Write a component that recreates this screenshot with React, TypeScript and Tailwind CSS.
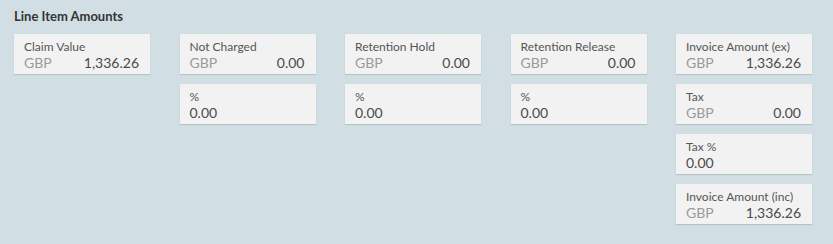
import React from "react";

type CardProps = { label: string; value: string; currency?: boolean };

function Card({ label, value, currency = true }: CardProps) {
  return (
    <div className="h-[40px] bg-[#f2f2f2] shadow-[0_1px_1px_rgba(0,0,0,0.12)] pl-[10px] pr-[11px] pt-[5px]">
      <div className="text-[12px] leading-[15px] text-[#555]">{label}</div>
      {currency ? (
        <div className="flex items-baseline justify-between text-[14px] leading-[17px]">
          <span className="text-[#9a9a9a]">GBP</span>
          <span className="text-[#4a4a4a]">{value}</span>
        </div>
      ) : (
        <div className="text-[14px] leading-[17px] text-[#4a4a4a]">{value}</div>
      )}
    </div>
  );
}

export default function App() {
  return (
    <div
      className="w-[833px] h-[244px] bg-[#d1dee3] pl-[14px] pt-[7px]"
      style={{ fontFamily: "Lato, 'Open Sans', sans-serif" }}
    >
      <div className="text-[13px] leading-[18px] font-bold text-[#333]">Line Item Amounts</div>
      <div className="mt-[9px] grid grid-cols-[repeat(5,136px)] gap-x-[29.5px] items-start">
        <div className="flex flex-col gap-[10px]">
          <Card label="Claim Value" value="1,336.26" />
        </div>
        <div className="flex flex-col gap-[10px]">
          <Card label="Not Charged" value="0.00" />
          <Card label="%" value="0.00" currency={false} />
        </div>
        <div className="flex flex-col gap-[10px]">
          <Card label="Retention Hold" value="0.00" />
          <Card label="%" value="0.00" currency={false} />
        </div>
        <div className="flex flex-col gap-[10px]">
          <Card label="Retention Release" value="0.00" />
          <Card label="%" value="0.00" currency={false} />
        </div>
        <div className="flex flex-col gap-[10px]">
          <Card label="Invoice Amount (ex)" value="1,336.26" />
          <Card label="Tax" value="0.00" />
          <Card label="Tax %" value="0.00" currency={false} />
          <Card label="Invoice Amount (inc)" value="1,336.26" />
        </div>
      </div>
    </div>
  );
}
